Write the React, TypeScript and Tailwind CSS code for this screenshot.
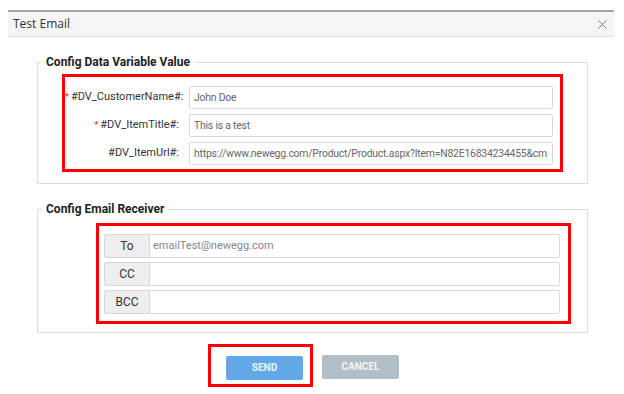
import { X } from 'lucide-react';

const vars = [
  { label: '#DV_CustomerName#:', value: 'John Doe', required: true },
  { label: '#DV_ItemTitle#:', value: 'This is a test', required: true },
  {
    label: '#DV_ItemUrl#:',
    value: 'https://www.newegg.com/Product/Product.aspx?Item=N82E16834234455&cm',
    required: false,
  },
];

const receivers = [
  { label: 'To', placeholder: 'emailTest@newegg.com' },
  { label: 'CC', placeholder: '' },
  { label: 'BCC', placeholder: '' },
];

export default function App() {
  return (
    <div className="w-[624px] h-[394px] bg-white pt-[10px] font-['Roboto',sans-serif] overflow-hidden">
      <div className="ml-[8px] w-[606px]">
        {/* Header */}
        <div className="h-[27px] border-t-2 border-[#a3a3a3] border-b border-b-[#e2e2e2] bg-[#f5f5f5] flex items-center justify-between pl-[5px] pr-[4px]">
          <span className="text-[12px] text-[#333] font-['Open_Sans',sans-serif]">Test Email</span>
          <X className="w-[15px] h-[15px] text-[#777]" strokeWidth={1.5} />
        </div>

        {/* Body */}
        <div className="pl-[29px] pr-[26px] pt-[18px]">
          <fieldset className="min-w-0 border border-[#dcdcdc] pb-[11px] pt-[5px]">
            <legend className="ml-[4px] px-[4px] text-[12px] leading-[14px] font-bold text-[#222]">
              Config Data Variable Value
            </legend>
            <div className="mx-[24px] border-[3px] border-[#ff0000] pt-[9px] pb-[4px] pr-[7px] flex flex-col gap-[5px]">
              {vars.map((v) => (
                <div key={v.label} className="flex items-center">
                  <div className="w-[114px] shrink-0 text-right text-[11px] text-[#333]">
                    {v.required && <span className="text-[#ff2020] text-[9px] mr-[2px]">*</span>}
                    {v.label}
                  </div>
                  <div className="ml-[10px] flex-1 min-w-0 h-[23px] border border-[#d9d9d9] rounded-[2px] flex items-center pl-[4px] pr-[2px] overflow-hidden">
                    <span className="text-[10.4px] tracking-[-0.2px] text-[#666] whitespace-nowrap">{v.value}</span>
                  </div>
                </div>
              ))}
            </div>
          </fieldset>

          <fieldset className="min-w-0 mt-[18px] border border-[#dcdcdc] pb-[8px] pt-[7px]">
            <legend className="ml-[4px] px-[4px] text-[12px] leading-[14px] font-bold text-[#222]">
              Config Email Receiver
            </legend>
            <div className="ml-[58px] mr-[16px] border-[3px] border-[#ff0000] pt-[8px] pb-[7px] pl-[5px] pr-[8px] flex flex-col gap-[4px]">
              {receivers.map((r) => (
                <div key={r.label} className="flex h-[24px]">
                  <div className="w-[46px] bg-[#eeeeee] border border-[#d6d6d6] rounded-l-[2px] flex items-center justify-center text-[12px] text-[#333]">
                    {r.label}
                  </div>
                  <div className="flex-1 border border-l-0 border-[#d9d9d9] rounded-r-[2px] flex items-center px-[3px]">
                    <span className="text-[11px] text-[#888]">{r.placeholder}</span>
                  </div>
                </div>
              ))}
            </div>
          </fieldset>
        </div>

        {/* Actions */}
        <div className="flex items-center pl-[200px] mt-[11px]">
          <div className="border-[3px] border-[#ff0000] pl-[15px] pr-[7px] pt-[7px] pb-[4px]">
            <button className="w-[77px] h-[24px] bg-[#62a8e6] rounded-[2px] text-[10px] font-bold text-[#eaf4fd]">
              SEND
            </button>
          </div>
          <button className="ml-[9px] mt-[3px] w-[77px] h-[24px] bg-[#b2bec5] rounded-[2px] text-[10px] font-bold text-[#f3f5f6]">
            CANCEL
          </button>
        </div>
      </div>
    </div>
  );
}
